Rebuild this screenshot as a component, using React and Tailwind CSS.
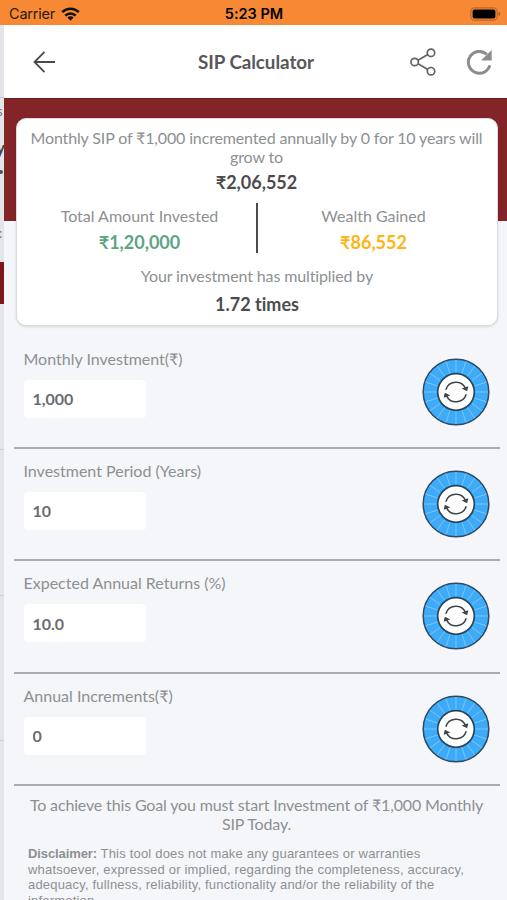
import { useState } from 'react'

const fields = [
  { id: 'monthly', label: 'Monthly Investment(₹)', value: '1,000' },
  { id: 'period', label: 'Investment Period (Years)', value: '10' },
  { id: 'returns', label: 'Expected Annual Returns (%)', value: '10.0' },
  { id: 'increments', label: 'Annual Increments(₹)', value: '0' },
]

const spokes = Array.from({ length: 20 }, (_, i) => i * 18)

const StatusBar = () => (
  <div className="flex h-[25px] shrink-0 items-center justify-between bg-[#f78935] pt-[2px] pr-[6px] pl-[9px] font-['Inter','Liberation_Sans',sans-serif] text-[14.500px] text-[#2b1a10]">
    <div className="flex w-[150px] items-center gap-[6px]">
      <span className="tracking-[-0.2px]">Carrier</span>
      <svg width="19" height="14" viewBox="0 0 19 14" fill="none" stroke="#111" strokeWidth="2.6">
        <path d="M1.2 5.2a11.8 11.8 0 0 1 16.6 0" />
        <path d="M4.3 8.6a7.4 7.4 0 0 1 10.4 0" />
        <path d="M9.5 13.8 6.4 10.6a4.4 4.4 0 0 1 6.2 0z" fill="#111" stroke="none" />
      </svg>
    </div>
    <span className="mr-[2px] font-semibold text-black">5:23 PM</span>
    <div className="flex w-[150px] justify-end">
      <svg width="31" height="14" viewBox="0 0 31 14">
        <rect x="0.8" y="0.8" width="26.4" height="12.4" rx="3.6" fill="none" stroke="#b5682f" strokeWidth="1.2" />
        <rect x="2.6" y="2.6" width="22.8" height="8.8" rx="2" fill="#000" />
        <path d="M28.6 5v4c1-.3 1.6-1 1.6-2s-.6-1.700-1.600-2z" fill="#9c5a28" />
      </svg>
    </div>
  </div>
)

const Header = () => (
  <header className="flex h-[73px] items-center bg-white pt-px pr-[15px] pl-[29px]">
    <button className="w-[96px]">
      <svg width="23" height="24" viewBox="0 0 23 24" fill="none" stroke="#4a4a4a" strokeWidth="1.8">
        <path d="M11.500 1.800 1.500 12l10 10.200M1.500 12H22" />
      </svg>
    </button>
    <h1 className="flex-1 pl-[11px] text-center text-[18.800px] font-bold tracking-[-0.05px] text-[#58585a]">
      SIP Calculator
    </h1>
    <div className="flex w-[120px] items-center justify-end gap-[30px]">
      <svg width="26" height="28" viewBox="0 0 26 28" fill="none" stroke="#626262" strokeWidth="1.7">
        <circle cx="4.700" cy="14" r="3.700" />
        <circle cx="21" cy="4.800" r="3.700" />
        <circle cx="21" cy="23.200" r="3.700" />
        <path d="M8 12.200 17.800 6.600M8 15.800l9.800 5.600" />
      </svg>
      <svg width="26" height="26" viewBox="0 0 26 26">
        <path d="M23.800 16.400A10.900 10.900 0 1 1 20.800 5.400" fill="none" stroke="#8c8c8c" strokeWidth="3" />
        <path d="M25.700 1v10.500H15z" fill="#8c8c8c" />
      </svg>
    </div>
  </header>
)

const SummaryCard = () => (
  <section className="mr-[9px] ml-3 -mt-[103px] h-[208px] rounded-[10px] border border-[#dcdcde] bg-white pt-[9px] text-center text-[16px] leading-[19px] text-[#8d9092] shadow-sm">
    <p className="pr-px tracking-[-0.14px]">
      Monthly SIP of ₹1,000 incremented annually by 0 for 10 years will
      <br />
      grow to
    </p>
    <p className="mt-[7px] pr-px text-[18px] font-bold text-[#4c4c4e]">₹2,06,552</p>
    <div className="mt-[11px] flex h-[50px]">
      <div className="flex-1 pt-[3px] pl-[7px]">
        <p>Total Amount Invested</p>
        <p className="mt-[8px] text-[18px] font-bold text-[#5da484]">₹1,20,000</p>
      </div>
      <div className="ml-px w-[2px] bg-[#4a4a4a]" />
      <div className="flex-1 pt-[3px] pr-[8px]">
        <p>Wealth Gained</p>
        <p className="mt-[8px] text-[18px] font-bold text-[#fdb515]">₹86,552</p>
      </div>
    </div>
    <p className="mt-[13px] tracking-[-0.12px]">Your investment has multiplied by</p>
    <p className="mt-[10px] text-[18px] font-bold text-[#4c4c4e]">1.72 times</p>
  </section>
)

const Dial = () => (
  <svg width="68" height="68" viewBox="-34 -34 68 68">
    <circle r="32.800" fill="#3dabf8" stroke="#2b4a60" strokeWidth="1.5" />
    {spokes.map((deg) => (
      <path key={deg} d="M0-19V-32" stroke="#83cbfb" strokeWidth="0.8" transform={`rotate(${deg})`} />
    ))}
    <circle r="18.300" fill="#fff" stroke="#29455a" strokeWidth="1.700" />
    <g fill="none" stroke="#3c454c" strokeWidth="1.500">
      <path d="M-10.200-2.200A10.600 10.600 0 0 1 9.500-3.800" />
      <path d="M10.200 2.200A10.600 10.600 0 0 1-9.500 3.800" />
    </g>
    <path d="M12.300-5.800 11.200-.8 5.600-3.600zM-12.300 5.800-11.200.8-5.600 3.600z" fill="#3c454c" />
  </svg>
)

const Field = ({ label, value, onChange }) => (
  <div className="flex h-[112.400px] justify-between border-b-2 border-[#a9abaf] pr-[10px] pl-[9.500px]">
    <label className="flex flex-col pt-[12px] text-[16px] leading-[19px] text-[#8d9092]">
      {label}
      <input
        className="mt-[12px] h-[38px] w-[122px] rounded-[4px] bg-white px-[9px] text-[16px] font-bold text-[#6a6c6e] outline-none"
        value={value}
        onChange={(e) => onChange(e.target.value)}
      />
    </label>
    <div className="pt-[21px]">
      <Dial />
    </div>
  </div>
)

// Edge of the screen underneath, visible during the slide transition
const PreviousScreen = () => (
  <div className="flex w-1 shrink-0 flex-col overflow-hidden bg-[#e4e5e9] text-[#77777b]">
    <div className="h-[73px] border-b border-[#c8c8cb]" />
    <div className="mt-1 h-[18px] w-1 overflow-hidden text-[13px] leading-[18px]">
      <span className="-ml-[3px]">s</span>
    </div>
    <div className="mt-[16px] h-[24px] w-1 overflow-hidden text-[17px] leading-[24px] font-bold text-[#44444a]">
      <span className="-ml-[4px]">y</span>
    </div>
    <div className="mt-[10px] h-[4px] w-[3px] rounded-r bg-[#55555a]" />
    <div className="mt-[50px] h-[18px] w-1 overflow-hidden text-[13px] leading-[18px]">
      <span className="-ml-px">:</span>
    </div>
    <div className="mt-[20px] h-[42px] bg-[#7b171d]" />
    <div className="mt-[145px] h-px bg-[#cfd0d4]" />
    <div className="mt-[145px] h-px bg-[#cfd0d4]" />
    <div className="mt-[144px] h-px bg-[#cfd0d4]" />
  </div>
)

const App = () => {
  const [values, setValues] = useState(() => Object.fromEntries(fields.map((f) => [f.id, f.value])))

  return (
    <div className="flex h-[900px] w-[507px] flex-col overflow-hidden bg-[#f5f6fa] font-['Lato','Noto_Sans',sans-serif] [font-variant-ligatures:none]">
      <StatusBar />
      <div className="flex min-h-0 flex-1">
        <PreviousScreen />
        <main className="min-w-0 flex-1">
          <Header />
          <div className="h-[122.500px] border-t border-[#6c1b20] bg-[#832429]" />
          <SummaryCard />

          <div className="mt-[11px] mr-[7px] ml-[10px]">
            {fields.map((f) => (
              <Field
                key={f.id}
                label={f.label}
                value={values[f.id]}
                onChange={(v) => setValues({ ...values, [f.id]: v })}
              />
            ))}
          </div>

          <p className="mt-[9px] pl-[2px] text-center text-[16px] leading-[19px] tracking-[-0.15px] text-[#8d9092]">
            To achieve this Goal you must start Investment of ₹1,000 Monthly
            <br />
            SIP Today.
          </p>
          <p className="mt-[13px] ml-6 font-['Liberation_Sans',sans-serif] text-[13px] leading-[15.500px] tracking-[0.19px] whitespace-nowrap text-[#8d9092]">
            <b className="tracking-[-0.1px]">Disclaimer:</b> This tool does not make any guarantees or warranties
            <br />
            whatsoever, expressed or implied, regarding the completeness, accuracy,
            <br />
            adequacy, fullness, reliability, functionality and/or the reliability of the
            <br />
            information.
          </p>
        </main>
      </div>
    </div>
  )
}

export default App
